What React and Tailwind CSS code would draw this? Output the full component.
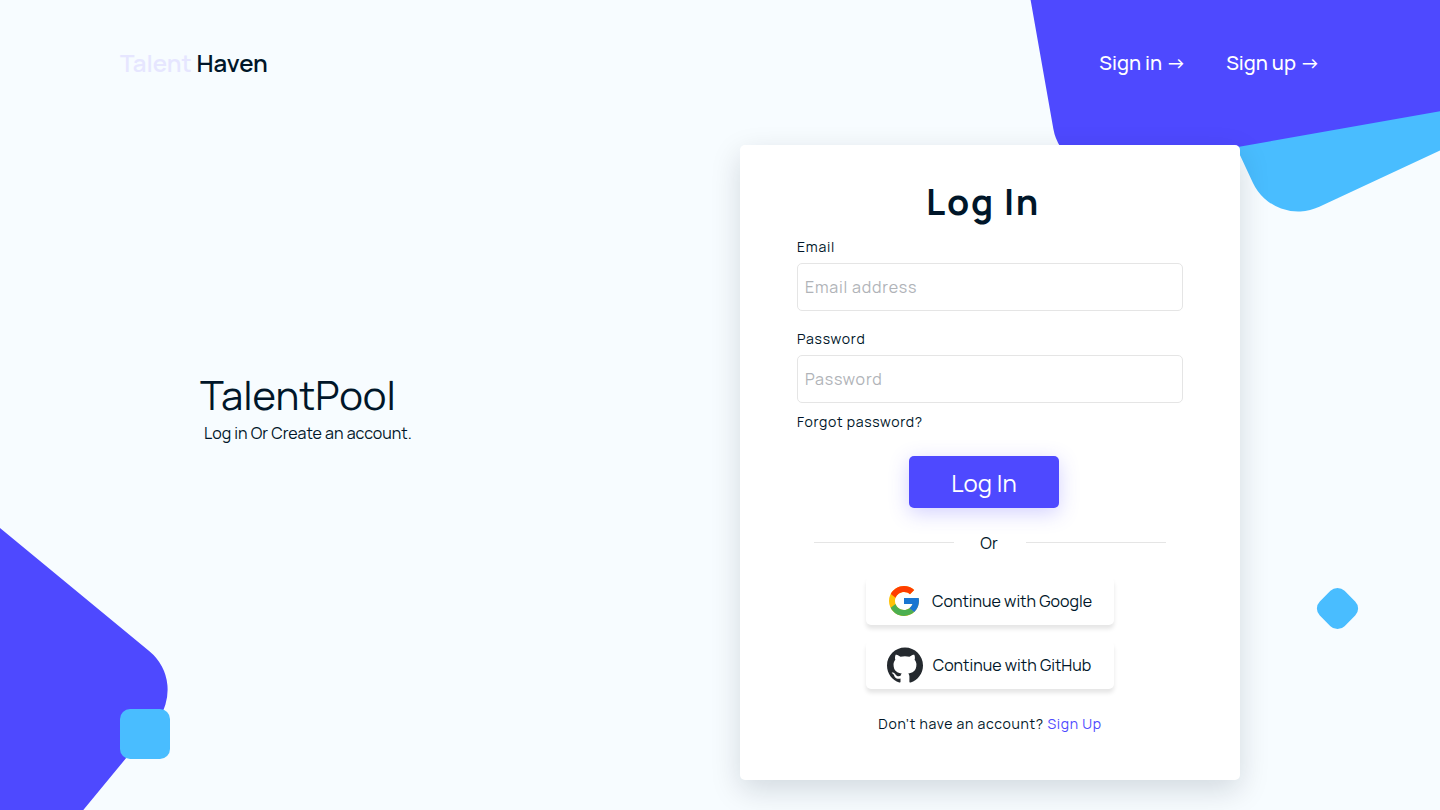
import { FcGoogle } from "react-icons/fc";
import { SiGithub } from "react-icons/si";

function Backdrop() {
  return (
    <div aria-hidden="true" className="pointer-events-none absolute inset-0 overflow-hidden">
      <div className="absolute -top-[272px] -right-[334px] size-[500px] origin-bottom-left rotate-[-25deg] rounded-[50px] bg-[#49bdff]" />
      <div className="absolute -top-[322px] -right-[122px] size-[500px] origin-bottom-left rotate-[-10deg] rounded-[50px] bg-[#4e49ff]" />
      <div className="absolute -bottom-[373px] -left-[312px] size-[500px] origin-top-right rotate-[39.5deg] rounded-[50px] bg-[#4e49ff]" />
      <div className="absolute bottom-[51px] left-[120px] size-[50px] rounded-[10px] bg-[#49bdff]" />
      <div className="absolute top-[591px] right-[85px] size-[35px] rotate-45 rounded-[10px] bg-[#49bdff]" />
    </div>
  );
}

function Header() {
  return (
    <header className="flex h-[125px] items-center justify-between px-[120px]">
      <a href="#home" className="text-2xl font-semibold">
        <span className="text-[#e6e6ff]">Talent</span> Haven
      </a>
      <nav className="flex gap-10 text-xl font-medium text-white">
        <a href="#sign-in">Sign in →</a>
        <a href="#sign-up">Sign up →</a>
      </nav>
    </header>
  );
}

function Field({ id, label, type, placeholder }) {
  return (
    <div className="flex flex-col gap-1.5 tracking-wider">
      <label htmlFor={id} className="text-sm">
        {label}
      </label>
      <input
        id={id}
        type={type}
        placeholder={placeholder}
        className="h-12 w-full rounded-[5px] border border-[#e5e5e5] bg-white px-[7px] text-base placeholder:text-[#b0b3b8]"
      />
    </div>
  );
}

function ProviderButton({ icon, children }) {
  return (
    <button
      type="button"
      className="flex h-12 w-[248px] items-center justify-center gap-2.5 rounded-[5px] bg-white pr-0.5 text-base shadow-[0_4px_4px_rgba(0,0,0,0.1)]"
    >
      {icon}
      {children}
    </button>
  );
}

function LoginCard() {
  return (
    <form className="flex h-fit w-[500px] flex-col rounded-[5px] bg-white px-[57px] pt-8 pb-[46px] shadow-[0_10px_30px_rgba(0,22,41,0.15)]">
      <h2 className="pr-3.5 text-center text-4xl leading-[50px] font-bold tracking-wider">Log In</h2>
      <div className="mt-2.5 flex flex-col gap-[18px]">
        <Field id="email" label="Email" type="email" placeholder="Email address" />
        <Field id="password" label="Password" type="password" placeholder="Password" />
      </div>
      <a href="#forgot" className="mt-[9px] self-start text-sm tracking-wider">
        Forgot password?
      </a>
      <button
        type="submit"
        className="mt-6 mr-3 h-[52px] w-[150px] self-center rounded-[5px] bg-[#4e49ff] pt-0.5 text-2xl text-white shadow-[0_5px_20px_rgba(78,73,255,0.25)]"
      >
        Log In
      </button>
      <div className="mt-[23px] flex items-center justify-between px-[17px]">
        <span className="mb-0.5 h-px w-[140px] bg-[#e5e5e5]" />
        <span className="pr-0.5 text-base leading-6">Or</span>
        <span className="mb-0.5 h-px w-[140px] bg-[#e5e5e5]" />
      </div>
      <div className="mt-[22px] flex flex-col items-center gap-4">
        <ProviderButton icon={<FcGoogle className="size-9" />}>Continue with Google</ProviderButton>
        <ProviderButton icon={<SiGithub className="size-9 text-[#24292e]" />}>Continue with GitHub</ProviderButton>
      </div>
      <p className="mt-[25px] text-center text-sm tracking-wider">
        Don’t have an account?{" "}
        <a href="#sign-up" className="text-[#4e49ff]">
          Sign Up
        </a>
      </p>
    </form>
  );
}

export default function App() {
  return (
    <div className="relative min-h-screen overflow-hidden bg-[#f7fcff] font-['Manrope','Inter',sans-serif] text-[#001629]">
      <Backdrop />
      <div className="relative">
        <Header />
        <main className="flex justify-between px-[200px] pt-5 pb-[30px]">
          <section className="pt-[225px]">
            <h1 className="text-[40px] leading-[50px]">TalentPool</h1>
            <p className="pt-px pl-1 text-base">Log in Or Create an account.</p>
          </section>
          <LoginCard />
        </main>
      </div>
    </div>
  );
}
